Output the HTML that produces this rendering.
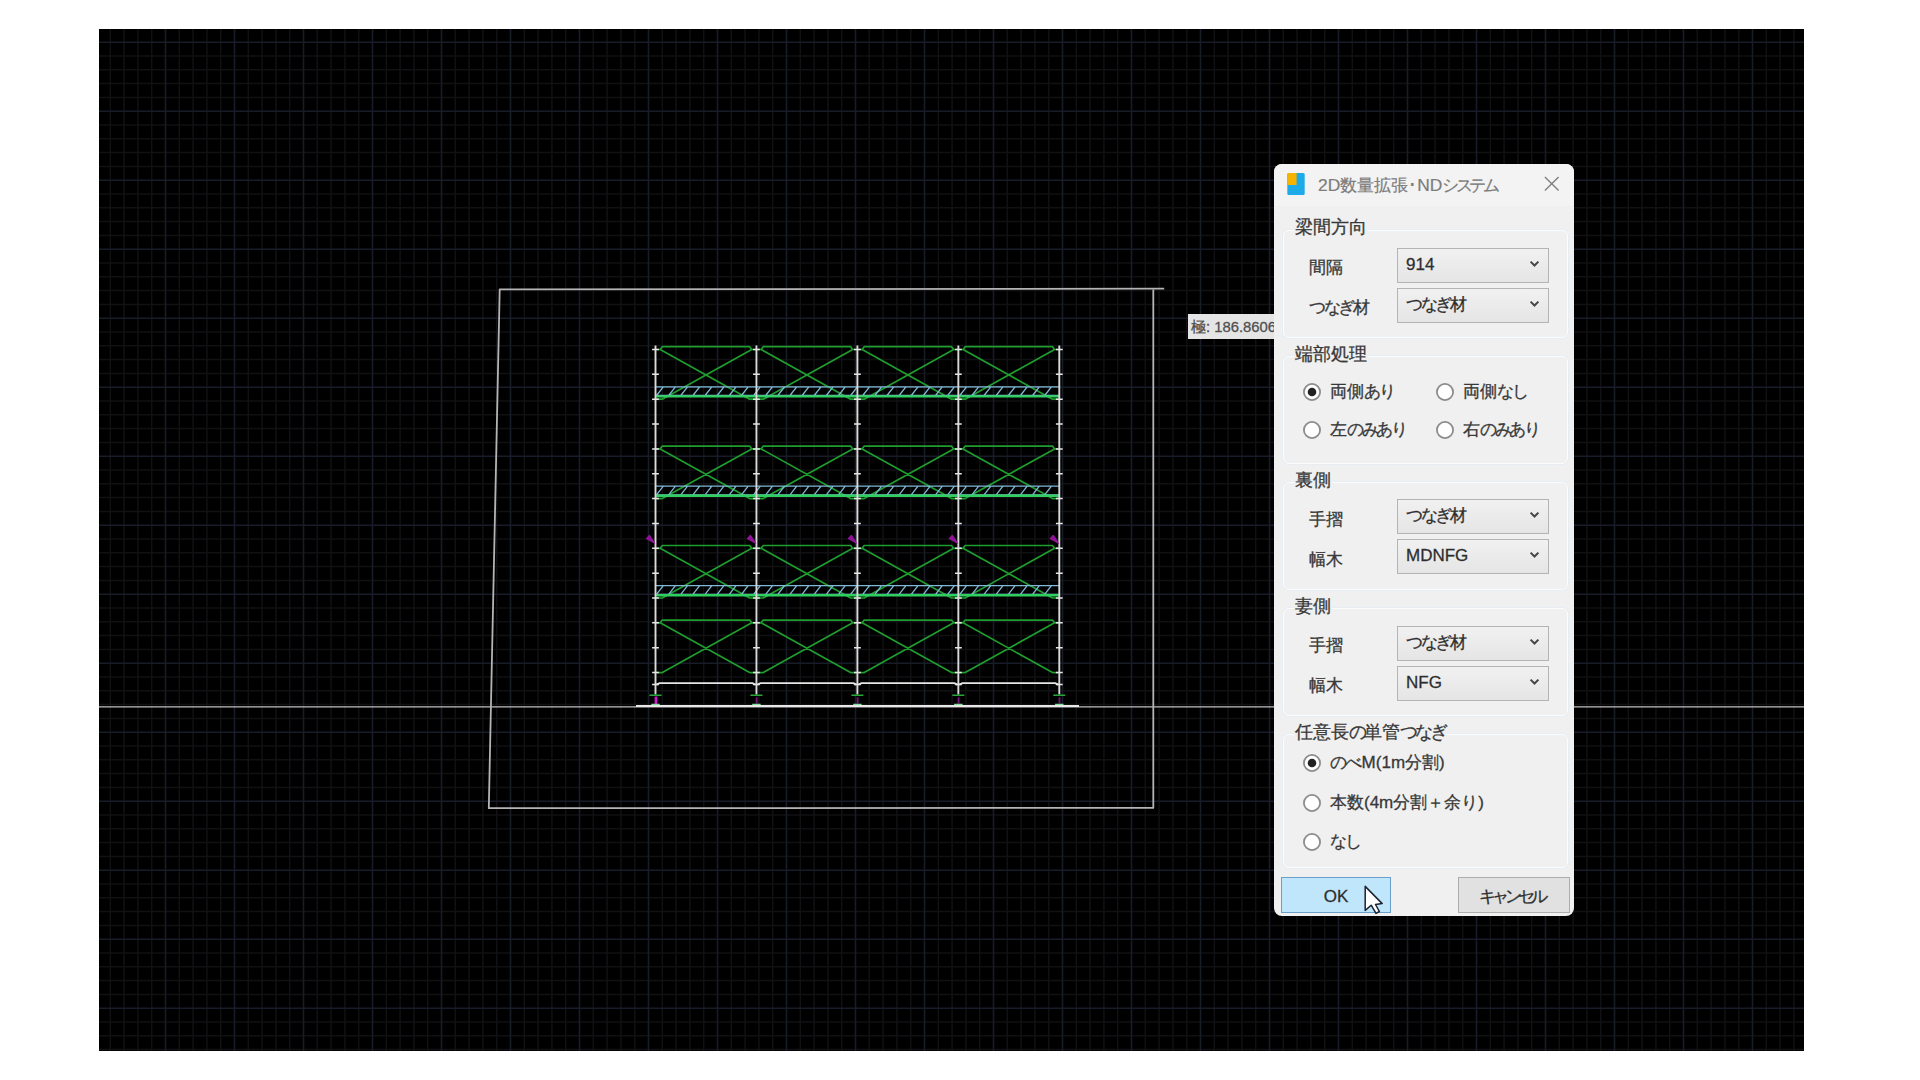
<!DOCTYPE html>
<html lang="ja">
<head>
<meta charset="utf-8">
<title>2D数量拡張･NDシステム</title>
<style>
html,body{margin:0;padding:0;}
body{width:1920px;height:1080px;background:#fff;position:relative;overflow:hidden;font-family:"Liberation Sans",sans-serif;}
.cad{position:absolute;left:99px;top:29px;display:block;}
.tip{position:absolute;left:1188px;top:314px;width:100px;height:25px;background:#e5e5e5;color:#505050;font-size:14.8px;line-height:26px;-webkit-text-stroke:0.3px #505050;white-space:nowrap;overflow:hidden;box-sizing:border-box;padding-left:3px;}
.dlg{position:absolute;left:1274px;top:164px;width:300px;height:752px;background:#f0f0f0;border-radius:8px;overflow:hidden;color:#383838;font-size:17px;-webkit-text-stroke:0.3px #383838;}
.dlg *{box-sizing:border-box;}
.tbar{position:absolute;left:0;top:0;width:100%;height:42px;background:#f3f3f3;}
.ticon{position:absolute;left:13px;top:9px;width:18px;height:22px;}
.title{position:absolute;left:44px;top:9px;height:24px;line-height:24px;font-size:17.4px;color:#7c7c7c;-webkit-text-stroke:0.2px #7c7c7c;white-space:nowrap;}
.title .k{letter-spacing:-3.5px;}
.h{letter-spacing:-2.4px;}
.glab .h{letter-spacing:-3px;}
.k{letter-spacing:-4.1px;}
.close{position:absolute;left:270px;top:12.3px;width:15.5px;height:15.5px;}
.grp{position:absolute;left:8.5px;width:285px;border:1.5px solid #fafcfe;border-radius:6px;box-shadow:0 0 0 1px #e7edf2;}
.glab{position:absolute;left:20px;height:22px;line-height:22px;font-size:17.5px;color:#3a3a3a;background:#f0f0f0;padding:0 1px;white-space:nowrap;}
.lab{position:absolute;left:35px;height:22px;line-height:22px;white-space:nowrap;}
.combo{position:absolute;left:123px;width:152px;height:35px;border:1.3px solid #b4b4b4;background:linear-gradient(#f1f1f1,#e5e5e5);line-height:32.6px;padding-left:8px;color:#2b2b2b;white-space:nowrap;}
.combo svg{position:absolute;right:8px;top:11px;}
.radio{position:absolute;display:block;}
.rt{position:absolute;height:22px;line-height:22px;white-space:nowrap;}
.btn{position:absolute;top:713px;height:36px;line-height:37px;text-align:center;border:1px solid #adadad;background:#e1e1e1;color:#2b2b2b;}
.btn.ok{left:7px;width:110px;background:#c0e6fc;border-color:#6a9fc9;}
.btn.cancel{left:184px;width:112px;padding-right:5px;}
.cursor{position:absolute;left:1363px;top:884px;width:22px;height:32px;}
</style>
</head>
<body>
<svg class="cad" width="1705" height="1022" viewBox="99 29 1705 1022">
<rect x="99" y="29" width="1705" height="1022" fill="#000001"/>
<path d="M110.3 29V1051M124.1 29V1051M137.9 29V1051M151.7 29V1051M179.3 29V1051M193.1 29V1051M206.9 29V1051M220.7 29V1051M248.3 29V1051M262.1 29V1051M275.9 29V1051M289.7 29V1051M317.3 29V1051M331.1 29V1051M344.9 29V1051M358.7 29V1051M386.3 29V1051M400.1 29V1051M413.9 29V1051M427.7 29V1051M455.3 29V1051M469.1 29V1051M482.9 29V1051M496.7 29V1051M524.3 29V1051M538.1 29V1051M551.9 29V1051M565.7 29V1051M593.3 29V1051M607.1 29V1051M620.9 29V1051M634.7 29V1051M662.3 29V1051M676.1 29V1051M689.9 29V1051M703.7 29V1051M731.3 29V1051M745.1 29V1051M758.9 29V1051M772.7 29V1051M800.3 29V1051M814.1 29V1051M827.9 29V1051M841.7 29V1051M869.3 29V1051M883.1 29V1051M896.9 29V1051M910.7 29V1051M938.3 29V1051M952.1 29V1051M965.9 29V1051M979.7 29V1051M1007.3 29V1051M1021.1 29V1051M1034.9 29V1051M1048.7 29V1051M1076.3 29V1051M1090.1 29V1051M1103.9 29V1051M1117.7 29V1051M1145.3 29V1051M1159.1 29V1051M1172.9 29V1051M1186.7 29V1051M1214.3 29V1051M1228.1 29V1051M1241.9 29V1051M1255.7 29V1051M1283.3 29V1051M1297.1 29V1051M1310.9 29V1051M1324.7 29V1051M1352.3 29V1051M1366.1 29V1051M1379.9 29V1051M1393.7 29V1051M1421.3 29V1051M1435.1 29V1051M1448.9 29V1051M1462.7 29V1051M1490.3 29V1051M1504.1 29V1051M1517.9 29V1051M1531.7 29V1051M1559.3 29V1051M1573.1 29V1051M1586.9 29V1051M1600.7 29V1051M1628.3 29V1051M1642.1 29V1051M1655.9 29V1051M1669.7 29V1051M1697.3 29V1051M1711.1 29V1051M1724.9 29V1051M1738.7 29V1051M1766.3 29V1051M1780.1 29V1051M1793.9 29V1051M99 56H1804M99 69.8H1804M99 83.6H1804M99 97.4H1804M99 125H1804M99 138.8H1804M99 152.6H1804M99 166.4H1804M99 194H1804M99 207.8H1804M99 221.6H1804M99 235.4H1804M99 263H1804M99 276.8H1804M99 290.6H1804M99 304.4H1804M99 332H1804M99 345.8H1804M99 359.6H1804M99 373.4H1804M99 401H1804M99 414.8H1804M99 428.6H1804M99 442.4H1804M99 470H1804M99 483.8H1804M99 497.6H1804M99 511.4H1804M99 539H1804M99 552.8H1804M99 566.6H1804M99 580.4H1804M99 608H1804M99 621.8H1804M99 635.6H1804M99 649.4H1804M99 677H1804M99 690.8H1804M99 704.6H1804M99 718.4H1804M99 746H1804M99 759.8H1804M99 773.6H1804M99 787.4H1804M99 815H1804M99 828.8H1804M99 842.6H1804M99 856.4H1804M99 884H1804M99 897.8H1804M99 911.6H1804M99 925.4H1804M99 953H1804M99 966.8H1804M99 980.6H1804M99 994.4H1804M99 1022H1804M99 1035.8H1804M99 1049.6H1804" stroke="#111114" stroke-width="1.5" fill="none"/>
<path d="M165.5 29V1051M234.5 29V1051M303.5 29V1051M372.5 29V1051M441.5 29V1051M510.5 29V1051M579.5 29V1051M648.5 29V1051M717.5 29V1051M786.5 29V1051M855.5 29V1051M924.5 29V1051M993.5 29V1051M1062.5 29V1051M1131.5 29V1051M1200.5 29V1051M1269.5 29V1051M1338.5 29V1051M1407.5 29V1051M1476.5 29V1051M1545.5 29V1051M1614.5 29V1051M1683.5 29V1051M1752.5 29V1051M99 42.2H1804M99 111.2H1804M99 180.2H1804M99 249.2H1804M99 318.2H1804M99 387.2H1804M99 456.2H1804M99 525.2H1804M99 594.2H1804M99 663.2H1804M99 732.2H1804M99 801.2H1804M99 870.2H1804M99 939.2H1804M99 1008.2H1804" stroke="#181c28" stroke-width="1.6" fill="none"/>
<path d="M99 706.8H1804" stroke="#c0c0c0" stroke-width="1.2" fill="none"/>
<path d="M1164.2 288.7L499.7 289.3L488.8 808.2L1153.3 807.9V289" stroke="#b4b4b4" stroke-width="1.8" fill="none" stroke-linejoin="round"/>
<path d="M656.5 349.5H660.2L662.3 346.7H749.65L751.75 349.5H755.45M660.2 349.5L749.65 399.2H755.45M751.75 349.5L662.3 399.2H656.5M757.45 349.5H761.15L763.25 346.7H850.6L852.7 349.5H856.4M761.15 349.5L850.6 399.2H856.4M852.7 349.5L763.25 399.2H757.45M858.4 349.5H862.1L864.2 346.7H951.55L953.65 349.5H957.35M862.1 349.5L951.55 399.2H957.35M953.65 349.5L864.2 399.2H858.4M959.35 349.5H963.05L965.15 346.7H1052.5L1054.6 349.5H1058.3M963.05 349.5L1052.5 399.2H1058.3M1054.6 349.5L965.15 399.2H959.35M656.5 448.9H660.2L662.3 446.1H749.65L751.75 448.9H755.45M660.2 448.9L749.65 498.6H755.45M751.75 448.9L662.3 498.6H656.5M757.45 448.9H761.15L763.25 446.1H850.6L852.7 448.9H856.4M761.15 448.9L850.6 498.6H856.4M852.7 448.9L763.25 498.6H757.45M858.4 448.9H862.1L864.2 446.1H951.55L953.65 448.9H957.35M862.1 448.9L951.55 498.6H957.35M953.65 448.9L864.2 498.6H858.4M959.35 448.9H963.05L965.15 446.1H1052.5L1054.6 448.9H1058.3M963.05 448.9L1052.5 498.6H1058.3M1054.6 448.9L965.15 498.6H959.35M656.5 548.3H660.2L662.3 545.5H749.65L751.75 548.3H755.45M660.2 548.3L749.65 598H755.45M751.75 548.3L662.3 598H656.5M757.45 548.3H761.15L763.25 545.5H850.6L852.7 548.3H856.4M761.15 548.3L850.6 598H856.4M852.7 548.3L763.25 598H757.45M858.4 548.3H862.1L864.2 545.5H951.55L953.65 548.3H957.35M862.1 548.3L951.55 598H957.35M953.65 548.3L864.2 598H858.4M959.35 548.3H963.05L965.15 545.5H1052.5L1054.6 548.3H1058.3M963.05 548.3L1052.5 598H1058.3M1054.6 548.3L965.15 598H959.35M656.5 622.85H660.2L662.3 620.05H749.65L751.75 622.85H755.45M660.2 622.85L749.65 672.55H755.45M751.75 622.85L662.3 672.55H656.5M757.45 622.85H761.15L763.25 620.05H850.6L852.7 622.85H856.4M761.15 622.85L850.6 672.55H856.4M852.7 622.85L763.25 672.55H757.45M858.4 622.85H862.1L864.2 620.05H951.55L953.65 622.85H957.35M862.1 622.85L951.55 672.55H957.35M953.65 622.85L864.2 672.55H858.4M959.35 622.85H963.05L965.15 620.05H1052.5L1054.6 622.85H1058.3M963.05 622.85L1052.5 672.55H1058.3M1054.6 622.85L965.15 672.55H959.35" stroke="#1f9d2e" stroke-width="1.7" fill="none" stroke-linejoin="round"/>
<path d="M655.5 386.8H1059.3M655.5 395.5H1059.3M656.5 395.5L663.3 386.8M668.63 395.5L675.43 386.8M680.76 395.5L687.56 386.8M692.89 395.5L699.69 386.8M705.02 395.5L711.82 386.8M717.15 395.5L723.95 386.8M729.28 395.5L736.08 386.8M741.41 395.5L748.21 386.8M753.54 395.5L760.34 386.8M765.67 395.5L772.47 386.8M777.8 395.5L784.6 386.8M789.93 395.5L796.73 386.8M802.06 395.5L808.86 386.8M814.19 395.5L820.99 386.8M826.32 395.5L833.12 386.8M838.45 395.5L845.25 386.8M850.58 395.5L857.38 386.8M862.71 395.5L869.51 386.8M874.84 395.5L881.64 386.8M886.97 395.5L893.77 386.8M899.1 395.5L905.9 386.8M911.23 395.5L918.03 386.8M923.36 395.5L930.16 386.8M935.49 395.5L942.29 386.8M947.62 395.5L954.42 386.8M959.75 395.5L966.55 386.8M971.88 395.5L978.68 386.8M984.01 395.5L990.81 386.8M996.14 395.5L1002.94 386.8M1008.27 395.5L1015.07 386.8M1020.4 395.5L1027.2 386.8M1032.53 395.5L1039.33 386.8M1044.66 395.5L1051.46 386.8M655.5 486.2H1059.3M655.5 494.9H1059.3M656.5 494.9L663.3 486.2M668.63 494.9L675.43 486.2M680.76 494.9L687.56 486.2M692.89 494.9L699.69 486.2M705.02 494.9L711.82 486.2M717.15 494.9L723.95 486.2M729.28 494.9L736.08 486.2M741.41 494.9L748.21 486.2M753.54 494.9L760.34 486.2M765.67 494.9L772.47 486.2M777.8 494.9L784.6 486.2M789.93 494.9L796.73 486.2M802.06 494.9L808.86 486.2M814.19 494.9L820.99 486.2M826.32 494.9L833.12 486.2M838.45 494.9L845.25 486.2M850.58 494.9L857.38 486.2M862.71 494.9L869.51 486.2M874.84 494.9L881.64 486.2M886.97 494.9L893.77 486.2M899.1 494.9L905.9 486.2M911.23 494.9L918.03 486.2M923.36 494.9L930.16 486.2M935.49 494.9L942.29 486.2M947.62 494.9L954.42 486.2M959.75 494.9L966.55 486.2M971.88 494.9L978.68 486.2M984.01 494.9L990.81 486.2M996.14 494.9L1002.94 486.2M1008.27 494.9L1015.07 486.2M1020.4 494.9L1027.2 486.2M1032.53 494.9L1039.33 486.2M1044.66 494.9L1051.46 486.2M655.5 585.6H1059.3M655.5 594.3H1059.3M656.5 594.3L663.3 585.6M668.63 594.3L675.43 585.6M680.76 594.3L687.56 585.6M692.89 594.3L699.69 585.6M705.02 594.3L711.82 585.6M717.15 594.3L723.95 585.6M729.28 594.3L736.08 585.6M741.41 594.3L748.21 585.6M753.54 594.3L760.34 585.6M765.67 594.3L772.47 585.6M777.8 594.3L784.6 585.6M789.93 594.3L796.73 585.6M802.06 594.3L808.86 585.6M814.19 594.3L820.99 585.6M826.32 594.3L833.12 585.6M838.45 594.3L845.25 585.6M850.58 594.3L857.38 585.6M862.71 594.3L869.51 585.6M874.84 594.3L881.64 585.6M886.97 594.3L893.77 585.6M899.1 594.3L905.9 585.6M911.23 594.3L918.03 585.6M923.36 594.3L930.16 585.6M935.49 594.3L942.29 585.6M947.62 594.3L954.42 585.6M959.75 594.3L966.55 585.6M971.88 594.3L978.68 585.6M984.01 594.3L990.81 585.6M996.14 594.3L1002.94 585.6M1008.27 594.3L1015.07 585.6M1020.4 594.3L1027.2 585.6M1032.53 594.3L1039.33 585.6M1044.66 594.3L1051.46 585.6" stroke="#7fb9d6" stroke-width="1.3" fill="none"/>
<path d="M655.5 396.4H1059.3M655.5 495.8H1059.3M655.5 595.2H1059.3" stroke="#2fd060" stroke-width="2.4" fill="none"/>
<path d="M655.5 345.6V694.6M756.45 345.6V694.6M857.4 345.6V694.6M958.35 345.6V694.6M1059.3 345.6V694.6" stroke="#dadada" stroke-width="1.9" fill="none"/>
<path d="M652.1 349.5H658.9M652.1 374.35H658.9M652.1 399.2H658.9M652.1 424.05H658.9M652.1 448.9H658.9M652.1 473.75H658.9M652.1 498.6H658.9M652.1 523.45H658.9M652.1 548.3H658.9M652.1 573.15H658.9M652.1 598H658.9M652.1 622.85H658.9M652.1 647.7H658.9M652.1 672.55H658.9M652.1 684.6H658.9M753.05 349.5H759.85M753.05 374.35H759.85M753.05 399.2H759.85M753.05 424.05H759.85M753.05 448.9H759.85M753.05 473.75H759.85M753.05 498.6H759.85M753.05 523.45H759.85M753.05 548.3H759.85M753.05 573.15H759.85M753.05 598H759.85M753.05 622.85H759.85M753.05 647.7H759.85M753.05 672.55H759.85M753.05 684.6H759.85M854 349.5H860.8M854 374.35H860.8M854 399.2H860.8M854 424.05H860.8M854 448.9H860.8M854 473.75H860.8M854 498.6H860.8M854 523.45H860.8M854 548.3H860.8M854 573.15H860.8M854 598H860.8M854 622.85H860.8M854 647.7H860.8M854 672.55H860.8M854 684.6H860.8M954.95 349.5H961.75M954.95 374.35H961.75M954.95 399.2H961.75M954.95 424.05H961.75M954.95 448.9H961.75M954.95 473.75H961.75M954.95 498.6H961.75M954.95 523.45H961.75M954.95 548.3H961.75M954.95 573.15H961.75M954.95 598H961.75M954.95 622.85H961.75M954.95 647.7H961.75M954.95 672.55H961.75M954.95 684.6H961.75M1055.9 349.5H1062.7M1055.9 374.35H1062.7M1055.9 399.2H1062.7M1055.9 424.05H1062.7M1055.9 448.9H1062.7M1055.9 473.75H1062.7M1055.9 498.6H1062.7M1055.9 523.45H1062.7M1055.9 548.3H1062.7M1055.9 573.15H1062.7M1055.9 598H1062.7M1055.9 622.85H1062.7M1055.9 647.7H1062.7M1055.9 672.55H1062.7M1055.9 684.6H1062.7" stroke="#e6e6e6" stroke-width="1.5" fill="none"/>
<path d="M656.5 684.6L659.5 683.1H752.45L755.45 684.6M757.45 684.6L760.45 683.1H853.4L856.4 684.6M858.4 684.6L861.4 683.1H954.35L957.35 684.6M959.35 684.6L962.35 683.1H1055.3L1058.3 684.6" stroke="#e6e6e6" stroke-width="1.8" fill="none"/>
<path d="M649.5 695.3H661.5M750.45 695.3H762.45M851.4 695.3H863.4M952.35 695.3H964.35M1053.3 695.3H1065.3" stroke="#27a838" stroke-width="1.6" fill="none"/>
<path d="M655.9 696.6V705" stroke="#d614d6" stroke-width="2.6" fill="none"/>
<path d="M756.65 697.2V703.6M857.6 697.2V703.6M958.55 697.2V703.6M1059.5 697.2V703.6" stroke="#7a1480" stroke-width="1.8" fill="none"/>
<path d="M651.3 704.6H659.7M752.25 704.6H760.65M853.2 704.6H861.6M954.15 704.6H962.55M1055.1 704.6H1063.5" stroke="#7fe39a" stroke-width="1.6" fill="none"/>
<path d="M636 706H1079" stroke="#e8e8e8" stroke-width="2.1" fill="none"/>
<path d="M654.9 543.4L646.1 538.6L649.5 535ZM755.85 543.4L747.05 538.6L750.45 535ZM856.8 543.4L848 538.6L851.4 535ZM957.75 543.4L948.95 538.6L952.35 535ZM1058.7 543.4L1049.9 538.6L1053.3 535Z" fill="#8e1296" stroke="#a218aa" stroke-width="0.8" stroke-linejoin="round"/>
</svg>
<div class="tip">極: 186.8606</div>
<div class="dlg">
  <div class="tbar"></div>
  <svg class="ticon" viewBox="0 0 18 22"><rect x="0.3" y="0" width="17.4" height="22" rx="1.6" fill="#1cabe8"/><path d="M1.8 0H9.6V12H0.3V1.5Q0.3 0 1.8 0Z" fill="#f6b300"/></svg>
  <div class="title">2D数量拡張･ND<span class="k">システム</span></div>
  <svg class="close" viewBox="0 0 17 17"><path d="M1 1L16 16M16 1L1 16" stroke="#808080" stroke-width="1.5" fill="none"/></svg>

  <div class="grp" style="top:65.5px;height:108px;"></div>
  <div class="glab" style="top:52px;">梁間方向</div>
  <div class="lab" style="top:93px;">間隔</div>
  <div class="combo" style="top:84px;">914<svg width="11" height="8" viewBox="0 0 11 8"><path d="M1.6 1.6L5.5 5.5L9.4 1.6" stroke="#454545" stroke-width="2" fill="none"/></svg></div>
  <div class="lab" style="top:133px;"><span class="h">つなぎ</span>材</div>
  <div class="combo" style="top:123.5px;"><span class="h">つなぎ</span>材<svg width="11" height="8" viewBox="0 0 11 8"><path d="M1.6 1.6L5.5 5.5L9.4 1.6" stroke="#454545" stroke-width="2" fill="none"/></svg></div>
  <div class="grp" style="top:191.5px;height:108px;"></div>
  <div class="glab" style="top:178.5px;">端部処理</div>
  <svg class="radio" style="left:28.5px;top:219px;" width="18" height="18" viewBox="0 0 18 18"><circle cx="9" cy="9" r="8.1" fill="#fff" stroke="#8c8c8c" stroke-width="1.8"/><circle cx="9" cy="9" r="4.3" fill="#222"/></svg><div class="rt" style="left:56.0px;top:217px;">両側<span class="h">あり</span></div>
  <svg class="radio" style="left:161.5px;top:219px;" width="18" height="18" viewBox="0 0 18 18"><circle cx="9" cy="9" r="8.1" fill="#fff" stroke="#8c8c8c" stroke-width="1.8"/></svg><div class="rt" style="left:189.0px;top:217px;">両側<span class="h">なし</span></div>
  <svg class="radio" style="left:28.5px;top:256.5px;" width="18" height="18" viewBox="0 0 18 18"><circle cx="9" cy="9" r="8.1" fill="#fff" stroke="#8c8c8c" stroke-width="1.8"/></svg><div class="rt" style="left:56.0px;top:254.5px;">左<span class="h">のみあり</span></div>
  <svg class="radio" style="left:161.5px;top:256.5px;" width="18" height="18" viewBox="0 0 18 18"><circle cx="9" cy="9" r="8.1" fill="#fff" stroke="#8c8c8c" stroke-width="1.8"/></svg><div class="rt" style="left:189.0px;top:254.5px;">右<span class="h">のみあり</span></div>
  <div class="grp" style="top:317.5px;height:108px;"></div>
  <div class="glab" style="top:304.5px;">裏側</div>
  <div class="lab" style="top:345px;">手摺</div>
  <div class="combo" style="top:335px;"><span class="h">つなぎ</span>材<svg width="11" height="8" viewBox="0 0 11 8"><path d="M1.6 1.6L5.5 5.5L9.4 1.6" stroke="#454545" stroke-width="2" fill="none"/></svg></div>
  <div class="lab" style="top:385px;">幅木</div>
  <div class="combo" style="top:375.4px;">MDNFG<svg width="11" height="8" viewBox="0 0 11 8"><path d="M1.6 1.6L5.5 5.5L9.4 1.6" stroke="#454545" stroke-width="2" fill="none"/></svg></div>
  <div class="grp" style="top:443.5px;height:108px;"></div>
  <div class="glab" style="top:430.5px;">妻側</div>
  <div class="lab" style="top:471px;">手摺</div>
  <div class="combo" style="top:462px;"><span class="h">つなぎ</span>材<svg width="11" height="8" viewBox="0 0 11 8"><path d="M1.6 1.6L5.5 5.5L9.4 1.6" stroke="#454545" stroke-width="2" fill="none"/></svg></div>
  <div class="lab" style="top:511px;">幅木</div>
  <div class="combo" style="top:501.8px;">NFG<svg width="11" height="8" viewBox="0 0 11 8"><path d="M1.6 1.6L5.5 5.5L9.4 1.6" stroke="#454545" stroke-width="2" fill="none"/></svg></div>
  <div class="grp" style="top:569.5px;height:134px;"></div>
  <div class="glab" style="top:557px;">任意長<span class="h">の</span>単管<span class="h">つなぎ</span></div>
  <svg class="radio" style="left:28.5px;top:590px;" width="18" height="18" viewBox="0 0 18 18"><circle cx="9" cy="9" r="8.1" fill="#fff" stroke="#8c8c8c" stroke-width="1.8"/><circle cx="9" cy="9" r="4.3" fill="#222"/></svg><div class="rt" style="left:56.0px;top:588px;"><span class="h">の</span>べM(1m分割)</div>
  <svg class="radio" style="left:28.5px;top:629.5px;" width="18" height="18" viewBox="0 0 18 18"><circle cx="9" cy="9" r="8.1" fill="#fff" stroke="#8c8c8c" stroke-width="1.8"/></svg><div class="rt" style="left:56.0px;top:627.5px;">本数(4m分割＋余り)</div>
  <svg class="radio" style="left:28.5px;top:669px;" width="18" height="18" viewBox="0 0 18 18"><circle cx="9" cy="9" r="8.1" fill="#fff" stroke="#8c8c8c" stroke-width="1.8"/></svg><div class="rt" style="left:56.0px;top:667px;"><span class="h">なし</span></div>

  <div class="btn ok">OK</div>
  <div class="btn cancel"><span class="k">キャンセル</span></div>
</div>
<svg class="cursor" viewBox="0 0 22 32"><path d="M2.2 2.4V26.4L8.2 21.2L13 29.4L16.4 27.5L12.5 20.5L19.2 19.6Z" fill="#fff" stroke="#1a2230" stroke-width="1.5" stroke-linejoin="round"/></svg>
</body>
</html>
